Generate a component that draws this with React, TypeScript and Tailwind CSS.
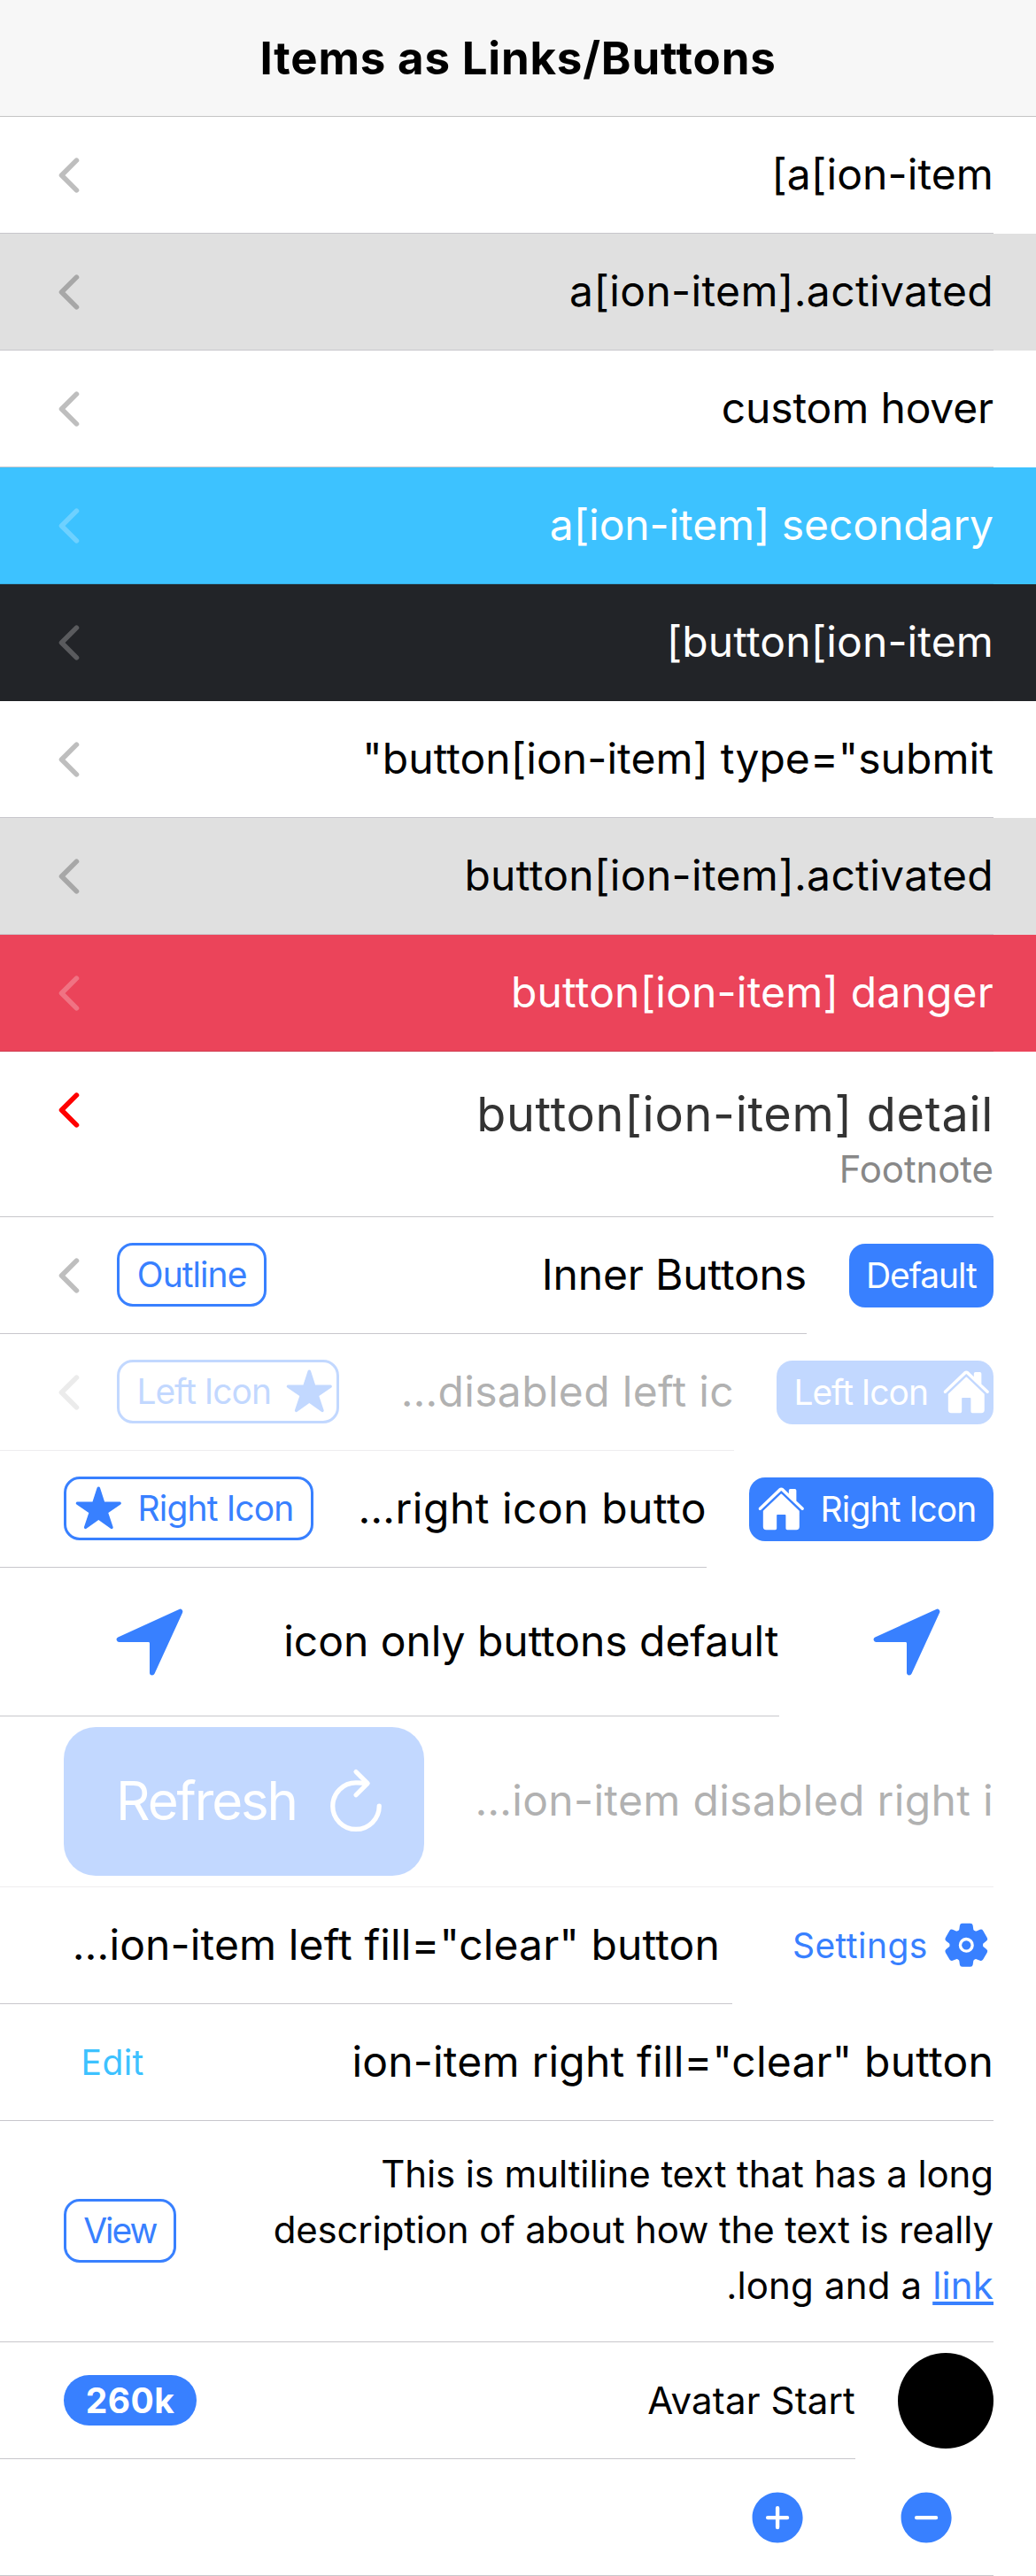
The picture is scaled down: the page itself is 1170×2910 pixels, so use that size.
import type { ReactNode } from "react";
import {
  IoAddCircle,
  IoHome,
  IoNavigate,
  IoRefresh,
  IoRemoveCircle,
  IoSettings,
  IoStar,
} from "react-icons/io5";

function Chevron({ className = "text-current opacity-25" }: { className?: string }) {
  return (
    <svg viewBox="0 0 512 512" className={`h-[60px] w-[60px] shrink-0 ${className}`}>
      <path
        d="M328 112L184 256l144 144"
        fill="none"
        stroke="currentColor"
        strokeWidth="48"
        strokeLinecap="round"
        strokeLinejoin="round"
      />
    </svg>
  );
}

type RowProps = {
  children?: ReactNode;
  start?: ReactNode;
  end?: ReactNode;
  className?: string;
  size?: string;
  line?: string;
  label?: string;
  detail?: boolean;
};

function Row({
  children,
  start,
  end,
  className = "bg-white text-black",
  size = "h-[132px]",
  line = "border-[#c8c7cc]",
  label = "pb-[2px]",
  detail = false,
}: RowProps) {
  return (
    <div className={`flex items-center pr-12 ${size} ${className}`}>
      {start && <div className="ml-12 flex shrink-0 items-center">{start}</div>}
      <div
        className={`flex h-full min-w-0 flex-1 items-center border-b ${line} ${detail ? "pl-12" : "pl-[72px]"}`}
      >
        <div className={`min-w-0 flex-1 whitespace-nowrap text-right ${label}`}>{children}</div>
        {end && <div className="flex shrink-0 items-center">{end}</div>}
        {detail && <Chevron className="mr-6 text-current opacity-25" />}
      </div>
    </div>
  );
}

const small = "flex h-[72px] items-center rounded-[18px] pb-[2px] text-[39px] leading-none whitespace-nowrap";

type ButtonProps = { children: ReactNode; className: string };

function Solid({ children, className }: ButtonProps) {
  return <button className={`${small} bg-[#3880ff] pr-[19.5px] text-white ${className}`}>{children}</button>;
}

function Outline({ children, className }: ButtonProps) {
  return (
    <button className={`${small} mb-px border-[3px] border-[#3880ff] pr-[19.5px] text-[#3880ff] ${className}`}>
      {children}
    </button>
  );
}

const leadIcon = "ml-[16.4px] -mr-[16.4px] h-[54.6px] w-[54.6px] shrink-0";
const trailIcon = "mr-auto -ml-[10.9px] h-[54.6px] w-[54.6px] shrink-0";

export default function App() {
  return (
    <div
      dir="rtl"
      className="w-[1170px] overflow-hidden bg-white font-['Inter',sans-serif] text-[48px] leading-[58px] text-black"
    >
      <header className="flex h-[132px] items-center justify-center border-b border-[#c4c4c4] bg-[#f7f7f7] text-[51px] font-bold tracking-[0.8px]">
        Items as Links/Buttons
      </header>

      <Row detail label="pb-[2px] tracking-[0.1px]"><span dir="ltr">[a[ion-item</span></Row>
      <Row detail className="bg-[#e0e0e0]" label="pb-[2px] tracking-[0.35px]">a[ion-item].activated</Row>
      <Row detail label="pb-[2px] tracking-[-0.15px]">custom hover</Row>
      <Row detail className="bg-[#3dc2ff] text-white" line="border-[#36abe0]" label="pb-[2px] tracking-[-0.1px]">
        a[ion-item] secondary
      </Row>
      <Row detail className="bg-[#222428] text-white" line="border-[#1e2023]" label="pb-[2px] tracking-[0.12px]">
        <span dir="ltr">[button[ion-item</span>
      </Row>
      <Row detail label="pb-[2px] tracking-[0.06px]">button[ion-item] type="submit"</Row>
      <Row detail className="bg-[#e0e0e0]" label="pb-[2px] tracking-[0.32px]">button[ion-item].activated</Row>
      <Row detail className="bg-[#eb445a] text-white" line="border-[#cf3c4f]" label="pb-[2px] tracking-[0.17px]">
        button[ion-item] danger
      </Row>

      <div className="h-[187px] pr-12">
        <div className="flex h-full items-start border-b border-[#c8c7cc] pl-12">
          <div className="flex-1 pt-[38px]">
            <h2 className="text-[54px] leading-[65px] tracking-[0.71px] text-[#333333]">button[ion-item] detail</h2>
            <p className="text-[42px] leading-[60px] tracking-[-0.1px] text-[#888888]">Footnote</p>
          </div>
          <Chevron className="mt-9 text-[#ff0000]" />
        </div>
      </div>

      <Row
        detail
        label="pb-[2px] tracking-[-0.15px]"
        start={<Solid className="w-[163px] tracking-[-1.15px]">Default</Solid>}
        end={<Outline className="w-[169px] tracking-[-0.95px]">Outline</Outline>}
      >
        Inner Buttons
      </Row>
      <Row
        detail
        className="opacity-30"
        label="pb-[2px] tracking-[0.33px]"
        start={<Solid className="w-[245px] tracking-[-1.03px]"><IoHome className={leadIcon} />Left Icon</Solid>}
        end={<Outline className="w-[251px] tracking-[-1.03px]"><IoStar className={leadIcon} />Left Icon</Outline>}
      >
        disabled left ic…
      </Row>
      <Row
        label="pb-[2px] tracking-[0.5px]"
        start={<Solid className="w-[276px] pl-[19.5px] tracking-[-0.85px]">Right Icon<IoHome className={trailIcon} /></Solid>}
        end={<Outline className="w-[282px] pl-[19.5px] tracking-[-0.85px]">Right Icon<IoStar className={trailIcon} /></Outline>}
      >
        right icon butto…
      </Row>
      <Row
        size="h-[168px]"
        label="pb-[2px] tracking-[-0.05px]"
        start={<button className="pl-[50.5px] pr-[52px] text-[#3880ff]"><IoNavigate className="h-[92px] w-[92px]" /></button>}
        end={<button className="px-[51px] text-[#3880ff]"><IoNavigate className="h-[92px] w-[92px]" /></button>}
      >
        icon only buttons default
      </Row>
      <Row
        size="h-[193px]"
        className="opacity-30"
        label="pb-[2px] tracking-[0.33px]"
        end={
          <button className="flex h-[168px] w-[407px] items-center rounded-[36px] bg-[#3880ff] pb-[2px] pr-[35px] text-[60px] leading-none tracking-[-2.1px] whitespace-nowrap text-white">
            <IoRefresh className="ml-[25px] h-[84px] w-[84px] shrink-0" />
            Refresh
          </button>
        }
      >
        ion-item disabled right i…
      </Row>
      <Row
        label="pb-[2px] tracking-[0.13px]"
        start={
          <button className={`${small} w-[247px] pr-[19.5px] tracking-[0.46px] text-[#3880ff]`}>
            <IoSettings className={leadIcon} />
            Settings
          </button>
        }
      >
        <span className="mr-[14px]">ion-item left fill="clear" button…</span>
      </Row>
      <Row
        label="pb-[2px] tracking-[0.2px]"
        end={<button className={`${small} mt-px px-[19.5px] tracking-[0.45px] text-[#3dc2ff]`}>Edit</button>}
      >
        ion-item right fill="clear" button
      </Row>
      <Row
        size="h-[250px]"
        label="pb-[4px]"
        end={<Outline className="w-[127px] tracking-[-2px]">View</Outline>}
      >
        <p className="text-[42px] leading-[63px] tracking-[-0.1px]">
          This is multiline text that has a long
          <br />
          <span className="tracking-[-0.16px]">description of about how the text is really</span>
          <br />
          <span className="tracking-[0.15px]">
            long and a <a className="text-[#3880ff] underline">link</a>.
          </span>
        </p>
      </Row>
      <Row
        start={<div className="h-[108px] w-[108px] rounded-full bg-black" />}
        end={
          <span className="flex h-[57px] w-[150px] items-center justify-center rounded-[30px] bg-[#3880ff] text-[39px] font-bold leading-none tracking-[0.4px] text-white">
            260k
          </span>
        }
      >
        <span className="text-[42px] tracking-[0.15px]">Avatar Start</span>
      </Row>
      <Row label="pt-px">
        <div className="flex items-center gap-[98px] pr-[41px] text-[#3880ff]">
          <IoRemoveCircle className="h-[70.2px] w-[70.2px]" />
          <IoAddCircle className="h-[70.2px] w-[70.2px]" />
        </div>
      </Row>
    </div>
  );
}
